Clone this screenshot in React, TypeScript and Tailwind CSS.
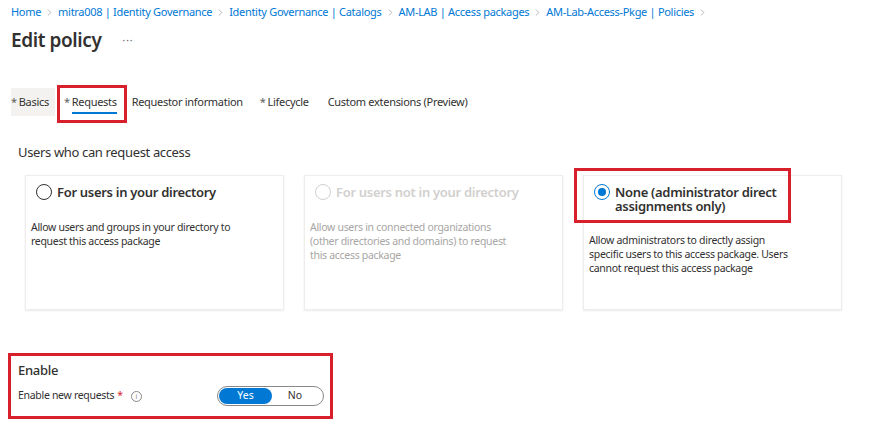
import React from "react";
import { ChevronRight } from "lucide-react";

const crumbs = [
  "Home",
  "mitra008 | Identity Governance",
  "Identity Governance | Catalogs",
  "AM-LAB | Access packages",
  "AM-Lab-Access-Pkge | Policies",
];

// Radio circle, checked or not
const Radio = ({ checked, disabled }: { checked?: boolean; disabled?: boolean }) => (
  <span
    className={`mt-[-1px] flex h-[16px] w-[16px] shrink-0 items-center justify-center rounded-full border ${
      checked ? "border-[#0078d4]" : disabled ? "border-[#d2d0ce]" : "border-[#323130]"
    }`}
  >
    {checked && <span className="h-[8px] w-[8px] rounded-full bg-[#0078d4]" />}
  </span>
);

interface CardProps {
  title: React.ReactNode;
  lines: string[];
  checked?: boolean;
  disabled?: boolean;
  marked?: boolean;
}

const OptionCard: React.FC<CardProps> = ({ title, lines, checked, disabled, marked }) => (
  <div className="h-[135px] w-[259px] border border-[#eeedec] bg-white shadow-[0_1px_2px_rgba(0,0,0,0.08)]">
    <div className="relative flex items-start gap-[5px] pl-[10px] pt-[9px]">
      <Radio checked={checked} disabled={disabled} />
      <div
        className={`text-[13px] font-semibold leading-[14px] tracking-[-0.3px] ${
          disabled ? "text-[#d2d0ce]" : "text-[#323130]"
        }`}
      >
        {title}
      </div>
      {/* annotation */}
      {marked && (
        <div className="absolute -left-[10px] -top-[8px] h-[55px] w-[217px] border-[3px] border-[#d7202b]" />
      )}
    </div>
    <div
      className={`mt-[20px] pl-[5px] text-[10.5px] leading-[14px] tracking-[-0.3px] ${
        disabled ? "text-[#a8a6a4]" : "text-[#323130]"
      }`}
    >
      {lines.map((l) => (
        <div key={l}>{l}</div>
      ))}
    </div>
  </div>
);

export default function App() {
  return (
    <div className="h-[442px] w-[895px] overflow-hidden bg-white font-['Segoe_UI','Noto_Sans',sans-serif] text-[#323130]">
      {/* Breadcrumb */}
      <div className="flex items-center pl-[11px] pt-[5px] text-[11px] leading-[14px] tracking-[-0.3px] text-[#0078d4]">
        {crumbs.map((c) => (
          <React.Fragment key={c}>
            <span>{c}</span>
            <ChevronRight size={11} strokeWidth={1.3} className="mx-[3px] text-[#8a8886]" />
          </React.Fragment>
        ))}
      </div>

      {/* Title */}
      <div className="mt-[7px] flex items-center pl-[11px]">
        <h1 className="text-[19px] font-semibold leading-[28px] tracking-[-0.4px]">Edit policy</h1>
        <span className="ml-[21px] text-[10px] tracking-[1px] text-[#605e5c]">···</span>
      </div>

      {/* Tabs */}
      <div className="mt-[34px] flex h-[28px] pl-[11px] text-[11px] leading-[16px] tracking-[-0.3px]">
        <div className="flex items-center bg-[#f3f2f1] pr-[6px]">
          <span className="mr-[2px] text-[#605e5c]">*</span>Basics
        </div>
        <div className="relative flex items-center pl-[9px] pr-[8px]">
          <span className="mr-[2px] text-[#605e5c]">*</span>
          <span className="relative">
            Requests
            <span className="absolute -bottom-[4px] left-0 right-0 h-[2px] bg-[#0078d4]" />
          </span>
          <div className="absolute -bottom-[7px] -right-[2px] -top-[3px] left-[2px] border-[3px] border-[#d7202b]" />
        </div>
        <div className="flex items-center pl-[7px] pr-[9px]">Requestor information</div>
        <div className="flex items-center pl-[8px] pr-[10px]">
          <span className="mr-[2px] text-[#605e5c]">*</span>Lifecycle
        </div>
        <div className="flex items-center pl-[9px]">Custom extensions (Preview)</div>
      </div>

      {/* Section */}
      <div className="mt-[26px] pl-[18px] text-[13px] leading-[20px] tracking-[-0.35px]">
        Users who can request access
      </div>

      <div className="mt-[13px] flex gap-[20px] pl-[25px]">
        <OptionCard
          title="For users in your directory"
          lines={["Allow users and groups in your directory to", "request this access package"]}
        />
        <OptionCard
          disabled
          title="For users not in your directory"
          lines={[
            "Allow users in connected organizations",
            "(other directories and domains) to request",
            "this access package",
          ]}
        />
        <OptionCard
          checked
          marked
          title={
            <>
              None (administrator direct
              <br />
              assignments only)
            </>
          }
          lines={[
            "Allow administrators to directly assign",
            "specific users to this access package. Users",
            "cannot request this access package",
          ]}
        />
      </div>

      {/* Enable */}
      <div className="ml-[8px] mt-[43px] h-[66px] w-[325px] border-[3px] border-[#d7202b] pl-[7px] pr-[6px] pt-[4px]">
        <div className="text-[13px] font-medium leading-[20px] tracking-[-0.3px]">Enable</div>
        <div className="mt-[6px] flex h-[20px] items-center justify-between">
          <div className="flex items-center text-[10.5px] tracking-[-0.3px]">
            <span>Enable new requests</span>
            <span className="ml-[3px] text-[#d7202b]">*</span>
            <span className="ml-[8px] flex h-[11px] w-[11px] items-center justify-center rounded-full border border-[#8a8886] text-[7px] leading-none text-[#8a8886]">
              i
            </span>
          </div>
          <div className="flex h-[20px] w-[107px] items-center rounded-full border border-[#8a8886] p-[1px] text-[10.5px]">
            <div className="flex h-full w-[53px] items-center justify-center rounded-full bg-[#0078d4] text-white">
              Yes
            </div>
            <div className="flex flex-1 items-center justify-center pr-[4px]">No</div>
          </div>
        </div>
      </div>
    </div>
  );
}
